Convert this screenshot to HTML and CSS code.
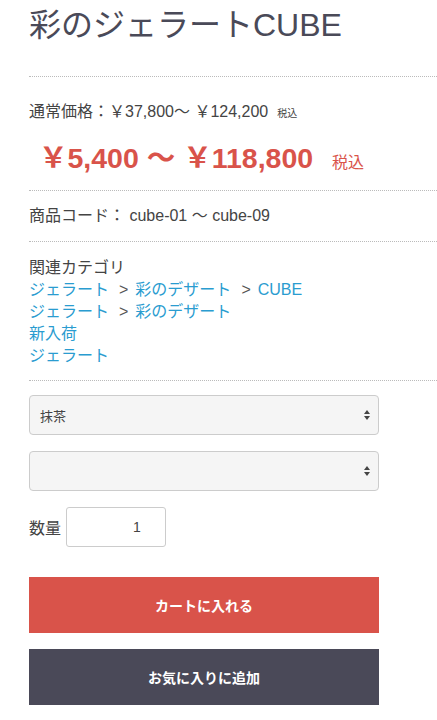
FILE: index.html
```html
<!DOCTYPE html>
<html lang="ja">
<head>
<meta charset="utf-8">
<link rel="stylesheet" href="styles.css">
</head>
<body>
<div class="product">
  <h1 class="title">彩のジェラートCUBE</h1>
  <div class="section price-section">
    <p class="normal-price">通常価格：￥37,800～ ￥124,200<span class="tax-small">税込</span></p>
    <p class="sale-price">￥5,400 ～ ￥118,800<span class="tax">税込</span></p>
  </div>
  <div class="section code-section">
    <p class="code">商品コード： cube-01 ～ cube-09</p>
  </div>
  <div class="section category-section">
    <p class="cat-label">関連カテゴリ</p>
    <ul class="cat-list">
      <li><a href="#">ジェラート</a><span class="sep">&gt;</span><a href="#">彩のデザート</a><span class="sep">&gt;</span><a href="#">CUBE</a></li>
      <li><a href="#">ジェラート</a><span class="sep">&gt;</span><a href="#">彩のデザート</a></li>
      <li><a href="#">新入荷</a></li>
      <li><a href="#">ジェラート</a></li>
    </ul>
  </div>
  <div class="section form-section">
    <div class="select-box">
      <span class="select-text">抹茶</span>
      <span class="arrows"><span class="up"></span><span class="down"></span></span>
    </div>
    <div class="select-box">
      <span class="select-text"></span>
      <span class="arrows"><span class="up"></span><span class="down"></span></span>
    </div>
    <div class="qty-row">
      <span class="qty-label">数量</span>
      <div class="qty-input">1</div>
    </div>
    <button class="btn btn-cart">カートに入れる</button>
    <button class="btn btn-fav">お気に入りに追加</button>
  </div>
</div>
</body>
</html>
```

FILE: styles.css
```css
* { box-sizing: border-box; }
body {
  margin: 0;
  background: #fff;
  font-family: "Liberation Sans", "Noto Sans CJK JP", sans-serif;
  color: #444;
}
.product {
  padding-left: 29px;
}
.title {
  margin: 0;
  padding-top: 3px;
  font-size: 32px;
  line-height: 44px;
  font-weight: 400;
  color: #4a4a58;
  height: 76px;
}
.section {
  border-top: 1px dotted #bbb;
}
p { margin: 0; }
.price-section {
  padding-top: 24px;
  height: 114px;
}
.normal-price {
  font-size: 16px;
  line-height: 22px;
}
.tax-small {
  font-size: 10px;
  margin-left: 9px;
}
.sale-price {
  margin-top: 18px;
  padding-left: 10px;
  font-size: 28.5px;
  line-height: 30px;
  font-weight: 700;
  color: #d9534a;
}
.tax {
  font-size: 16px;
  font-weight: 400;
  margin-left: 19px;
}
.code-section {
  height: 51px;
  padding-top: 14px;
}
.code {
  font-size: 16px;
  line-height: 22px;
}
.category-section {
  height: 139px;
  padding-top: 15px;
}
.cat-label {
  font-size: 16px;
  line-height: 22px;
}
.cat-list {
  list-style: none;
  margin: 0;
  padding: 0;
  font-size: 16px;
  line-height: 22px;
}
.cat-list a {
  color: #2a9cd0;
  text-decoration: none;
}
.sep {
  color: #555;
  margin: 0 7px 0 10px;
}
.form-section {
  padding-top: 14px;
  display: flex;
  flex-direction: column;
}
.select-box {
  width: 350px;
  height: 40px;
  border: 1px solid #ccc;
  border-radius: 4px;
  background: #f5f5f5;
  display: flex;
  align-items: center;
  justify-content: space-between;
  padding: 0 8px 0 10px;
  margin-bottom: 16px;
  font-family: "Noto Sans CJK JP", sans-serif;
  font-size: 13px;
  color: #444;
}
.arrows {
  display: flex;
  flex-direction: column;
  gap: 2px;
}
.up, .down {
  width: 0;
  height: 0;
  border-left: 3.5px solid transparent;
  border-right: 3.5px solid transparent;
}
.up { border-bottom: 4px solid #444; }
.down { border-top: 4px solid #444; }
.qty-row {
  display: flex;
  align-items: center;
  gap: 5px;
}
.qty-label {
  font-size: 16px;
}
.qty-input {
  width: 100px;
  height: 40px;
  border: 1px solid #ccc;
  border-radius: 3px;
  display: flex;
  align-items: center;
  padding-left: 66px;
  font-size: 14px;
  color: #444;
}
.btn {
  display: block;
  width: 350px;
  height: 56px;
  border: none;
  color: #fff;
  font-family: "Noto Sans CJK JP", sans-serif;
  font-size: 14px;
  font-weight: 700;
  padding: 0;
}
.btn-cart {
  margin-top: 30px;
  background: #d9534a;
}
.btn-fav {
  margin-top: 16px;
  background: #4a4958;
}
```
